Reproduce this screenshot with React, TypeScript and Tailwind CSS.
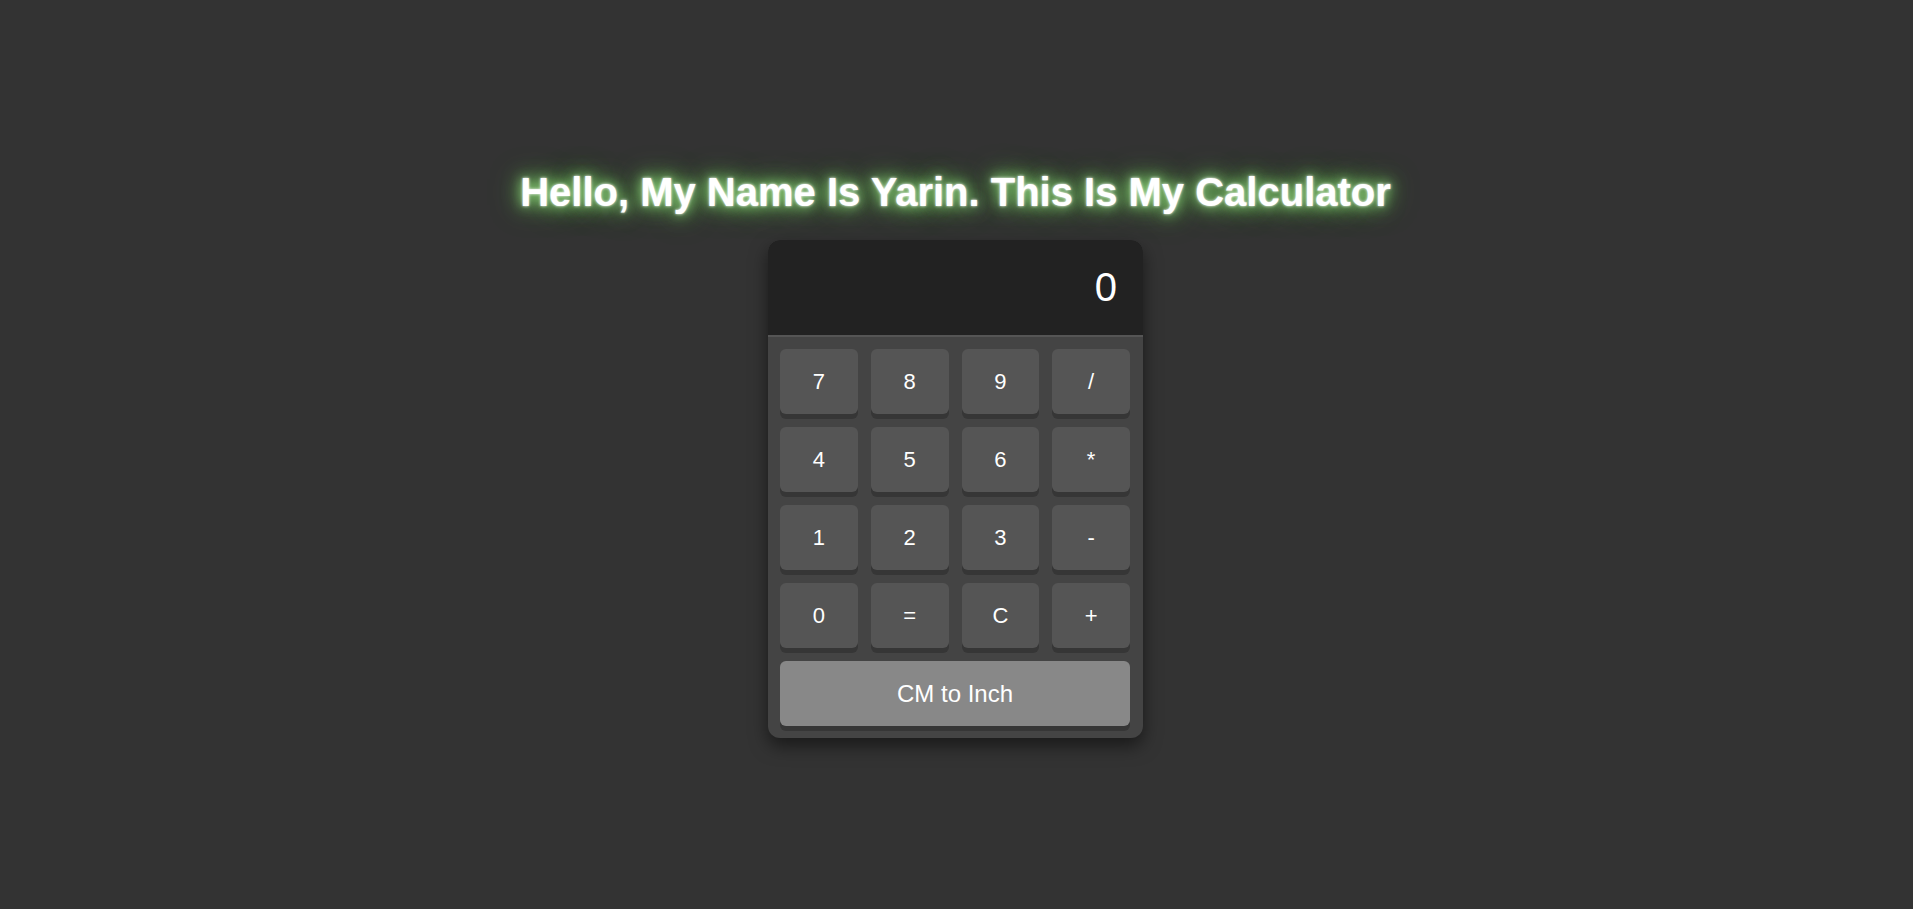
import React, { useState } from "react";

const keys = ["7", "8", "9", "/", "4", "5", "6", "*", "1", "2", "3", "-", "0", "=", "C", "+"];

export default function App() {
  const [display, setDisplay] = useState("0");
  const press = (k: string) => {
    if (k === "C") return setDisplay("0");
    if (k === "=") {
      try {
        // eslint-disable-next-line no-new-func
        const v = Function(`return (${display})`)();
        setDisplay(String(v));
      } catch {
        setDisplay("Error");
      }
      return;
    }
    setDisplay((d) => (d === "0" || d === "Error" ? k : d + k));
  };
  const cmToInch = () => {
    const n = parseFloat(display);
    if (!isNaN(n)) setDisplay(String(+(n / 2.54).toFixed(4)));
  };
  return (
    <div className="min-h-screen bg-[#333333] flex flex-col items-center pt-[170px] pr-[2px] font-['Liberation_Sans',Arial,sans-serif] text-white">
      <h1 className="text-[40px] leading-[45px] font-bold mb-[25px] [text-shadow:0_0_3px_#fff,0_0_12px_rgba(160,230,140,0.9),0_0_20px_rgba(110,200,90,1),0_0_30px_rgba(90,180,70,0.8)]">
        Hello, My Name Is Yarin. This Is My Calculator
      </h1>
      <div className="w-[375px] rounded-[12px] bg-[#444444] overflow-hidden shadow-[0_8px_18px_rgba(0,0,0,0.5)]">
        <div className="h-[95px] bg-[#222222] flex items-start justify-end pt-[24px] pr-[26px] text-[40px] leading-[46px]">
          {display}
        </div>
        <div className="h-[2px] bg-[#555555]" />
        <div className="pt-[12px] pb-[12px] pl-[12px] pr-[13px]">
          <div className="grid grid-cols-4 gap-[13px]">
            {keys.map((k) => (
              <button
                key={k}
                onClick={() => press(k)}
                className="h-[65px] rounded-[6px] bg-[#555555] text-white text-[22px] shadow-[0_5px_0_#363636] flex items-center justify-center"
              >
                {k}
              </button>
            ))}
            <button
              onClick={cmToInch}
              className="col-span-4 h-[65px] rounded-[6px] bg-[#888888] text-white text-[24px] shadow-[0_5px_0_#363636] flex items-center justify-center"
            >
              CM to Inch
            </button>
          </div>
        </div>
      </div>
    </div>
  );
}
